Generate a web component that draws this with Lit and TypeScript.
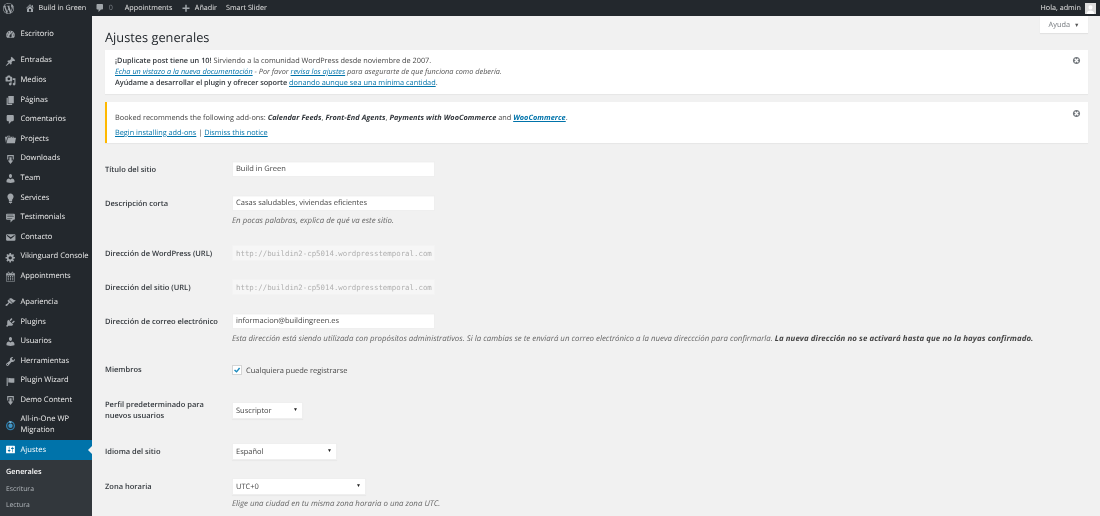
import { LitElement, html, css, svg } from "lit";
import { customElement } from "lit/decorators.js";

const P: Record<string, string> = {
  wp: "M20 10c0-5.51-4.49-10-10-10C4.48 0 0 4.49 0 10c0 5.52 4.48 10 10 10 5.51 0 10-4.48 10-10zM7.78 15.37L4.37 6.22c.55-.02 1.17-.08 1.17-.08.5-.06.44-1.13-.06-1.11 0 0-1.45.11-2.37.11-.18 0-.37 0-.58-.01C4.12 2.69 6.87 1.11 10 1.11c2.33 0 4.45.87 6.05 2.34-.68-.11-1.65.39-1.65 1.58 0 .74.45 1.36.9 2.1.35.61.55 1.36.55 2.46 0 1.49-1.4 5-1.4 5l-3.03-8.37c.54-.02.82-.17.82-.17.5-.05.44-1.25-.06-1.22 0 0-1.44.12-2.38.12-.87 0-2.33-.12-2.33-.12-.5-.03-.56 1.2-.06 1.22l.92.08 1.26 3.41zM17.41 10c.24-.64.74-1.87.43-4.25.7 1.29 1.05 2.71 1.05 4.25 0 3.29-1.73 6.24-4.4 7.78.97-2.59 1.94-5.2 2.92-7.78zM6.1 18.09C3.12 16.65 1.11 13.53 1.11 10c0-1.3.23-2.48.72-3.59C3.25 10.3 4.67 14.2 6.1 18.09zm4.03-6.63l2.58 6.98c-.86.29-1.76.45-2.71.45-.79 0-1.57-.11-2.29-.33.81-2.38 1.62-4.74 2.42-7.1z",
  home: "M16 8.5l1.53 1.53-1.06 1.06L10 4.62l-6.47 6.47-1.06-1.06L10 2.5l4 4v-2h2v4zm-6-2.46l6 5.99V18H4v-5.97zM12 17v-5H8v5h4z",
  comment: "M5 2h9c1.1 0 2 .9 2 2v7c0 1.1-.9 2-2 2h-2l-5 5v-5H5c-1.1 0-2-.9-2-2V4c0-1.1.9-2 2-2z",
  plus: "M17 9v3h-5.500v5.500h-3V12H3V9h5.500V3.500h3V9z",
  dash: "M3.76 16h12.48c1.1-1.37 1.76-3.11 1.76-5 0-4.42-3.58-8-8-8s-8 3.58-8 8c0 1.89.66 3.63 1.76 5zM10 4c.55 0 1 .45 1 1s-.45 1-1 1-1-.45-1-1 .45-1 1-1zM6 6c.55 0 1 .45 1 1s-.45 1-1 1-1-.45-1-1 .45-1 1-1zm8 0c.55 0 1 .45 1 1s-.45 1-1 1-1-.45-1-1 .45-1 1-1zm-5.37 5.55L12 7v6c0 1.1-.9 2-2 2s-2-.9-2-2c0-.57.24-1.08.63-1.45zM4 10c.55 0 1 .45 1 1s-.45 1-1 1-1-.45-1-1 .45-1 1-1zm12 0c.55 0 1 .45 1 1s-.45 1-1 1-1-.45-1-1 .45-1 1-1z",
  pin: "M10.44 3.02l1.82-1.82 6.36 6.35-1.83 1.82c-1.05-.68-2.48-.57-3.41.36l-.75.75c-.92.93-1.04 2.35-.35 3.41l-1.83 1.82-2.41-2.41-2.8 2.79c-.42.42-3.38 2.71-3.8 2.29s1.86-3.39 2.28-3.81l2.79-2.79L4.1 9.36l1.83-1.82c1.05.69 2.48.57 3.4-.36l.75-.75c.93-.92 1.05-2.35.36-3.41z",
  media: "M13 11V4c0-.55-.45-1-1-1h-1.67L9 1H5L3.67 3H2c-.55 0-1 .45-1 1v7c0 .55.45 1 1 1h10c.55 0 1-.45 1-1zM7 4.5c1.38 0 2.5 1.12 2.5 2.5S8.38 9.5 7 9.5 4.5 8.38 4.5 7 5.62 4.5 7 4.5zM14 6h5v10.5c0 1.38-1.12 2.5-2.5 2.5S14 17.88 14 16.5s1.12-2.5 2.5-2.5c.17 0 .34.02.5.05V9h-3V6zm-4 8.05V13h2v3.5c0 1.38-1.12 2.5-2.5 2.5S7 17.88 7 16.5 8.12 14 9.5 14c.17 0 .34.02.5.05z",
  page: "M6 15V2h10v13H6zm-1 1h8v2H3V5h2v11z",
  folder: "M4 5H.78c-.37 0-.74.32-.69.84l1.56 9.99S3.5 8.47 3.86 6.7c.11-.53.61-.7.98-.7H10s-.7-2.08-.77-2.31C9.11 3.25 8.89 3 8.45 3H5.14c-.36 0-.7.23-.8.64C4.25 4.04 4 5 4 5zm4.88 0h-4s.42-1 .87-1h2.13c.48 0 1 1 1 1zM2.67 16.25c-.31.47-.76.75-1.26.75h15.73c.54 0 .92-.31 1.03-.83.44-2.19 1.68-8.44 1.68-8.44.07-.5-.3-.73-.62-.73H16V5.53c0-.16-.26-.53-.66-.53h-3.76c-.52 0-.87.58-.87.58L10 7H5.59c-.32 0-.63.19-.69.5 0 0-1.59 6.7-1.72 7.33-.07.37-.22.99-.51 1.42zM15.01 7H12l.63-.83c.11-.11.28-.17.47-.17h1.61c.21 0 .3.11.3.33z",
  download: "M14.01 4v6h2V2H4v8h2.01V4h8zm-2 2v6h3l-5 6-5-6h3V6h4z",
  users: "M10 9.25c-2.27 0-2.73-3.44-2.73-3.44C7 4.02 7.82 2 9.97 2c2.16 0 2.98 2.02 2.71 3.81 0 0-.41 3.44-2.68 3.44zm0 2.57L12.72 10c2.39 0 4.52 2.33 4.52 4.53v2.49s-3.65 1.13-7.24 1.13c-3.65 0-7.24-1.13-7.24-1.13v-2.49c0-2.25 1.94-4.48 4.47-4.48z",
  bulb: "M10 1c3.11 0 5.63 2.52 5.63 5.62 0 1.84-2.03 4.58-2.03 4.58-.33.44-.6 1.25-.6 1.8v1c0 .55-.45 1-1 1H8c-.55 0-1-.45-1-1v-1c0-.55-.27-1.36-.6-1.8 0 0-2.02-2.74-2.02-4.58C4.38 3.52 6.89 1 10 1zM7 16.87V16h6v.87c0 .62-.13 1.13-1 1.13h-1c0 .62-.4 1-1.02 1s-.98-.38-.98-1H8c-.81 0-1-.51-1-1.13z",
  quote: "M4 3h12c.55 0 1.02.2 1.41.59S18 4.45 18 5v7c0 .55-.2 1.02-.59 1.41S16.55 14 16 14h-1l-5 5v-5H4c-.55 0-1.02-.2-1.41-.59S2 12.55 2 12V5c0-.55.2-1.02.59-1.41S3.45 3 4 3zm11 2H4v1h11V5zm1 3H4v1h12V8zm-3 3H4v1h9v-1z",
  mail: "M3.87 4h13.25C18.37 4 19 4.59 19 5.79v8.42c0 1.19-.63 1.79-1.88 1.79H3.87c-1.25 0-1.88-.6-1.88-1.79V5.79c0-1.2.63-1.79 1.88-1.79zm6.62 8.6l6.74-5.53c.24-.2.43-.66.13-1.07-.29-.41-.82-.42-1.17-.17l-5.7 3.86L4.8 5.83c-.35-.25-.88-.24-1.17.17-.3.41-.11.87.13 1.07z",
  gear: "M18 12h-2.18c-.17.7-.44 1.35-.81 1.93l1.54 1.54-2.1 2.1-1.54-1.54c-.58.36-1.23.63-1.91.79V19H8v-2.18c-.68-.16-1.33-.43-1.91-.79l-1.54 1.54-2.12-2.12 1.54-1.54c-.36-.58-.63-1.23-.79-1.91H1V9.03h2.17c.16-.7.44-1.35.8-1.94L2.43 5.55l2.1-2.1 1.54 1.54c.58-.37 1.24-.64 1.93-.81V2h3v2.18c.68.16 1.33.43 1.91.79l1.54-1.54 2.12 2.12-1.54 1.54c.36.59.64 1.24.8 1.94H18V12zm-8.5 1.5c1.66 0 3-1.34 3-3s-1.34-3-3-3-3 1.34-3 3 1.34 3 3 3z",
  cal: "M15 4h3v15H2V4h3V3c0-.41.15-.76.44-1.06.29-.29.65-.44 1.06-.44s.77.15 1.06.44c.29.3.44.65.44 1.06v1h4V3c0-.41.15-.76.44-1.06.29-.29.65-.44 1.06-.44s.77.15 1.06.44c.29.3.44.65.44 1.06v1zM6 3v2.5c0 .14.05.26.15.36.09.09.21.14.35.14s.26-.05.35-.14c.1-.1.15-.22.15-.36V3c0-.14-.05-.26-.15-.35-.09-.1-.21-.15-.35-.15s-.26.05-.35.15c-.1.09-.15.21-.15.35zm7 0v2.5c0 .14.05.26.14.36.1.09.22.14.36.14s.26-.05.36-.14c.09-.1.14-.22.14-.36V3c0-.14-.05-.26-.14-.35-.1-.1-.22-.15-.36-.15s-.26.05-.36.15c-.09.09-.14.21-.14.35zm4 15V8H3v10h14zM7 9v2H5V9h2zm2 0h2v2H9V9zm4 2V9h2v2h-2zm-6 1v2H5v-2h2zm2 0h2v2H9v-2zm4 2v-2h2v2h-2zm-6 1v2H5v-2h2zm4 2H9v-2h2v2zm4 0h-2v-2h2v2z",
  brush: "M14.48 11.06L7.41 3.99l1.5-1.5c.5-.56 2.3-.47 3.51.32 1.21.8 1.43 1.28 2.91 2.1 1.18.64 2.45 1.26 4.45.85zm-.71.71L6.7 4.7 4.93 6.47c-.39.39-.39 1.02 0 1.41l1.06 1.06c.39.39.39 1.03 0 1.42-.6.6-1.43 1.11-2.21 1.69-.35.26-.7.53-1.01.84C1.43 13.23.4 14.96 1.3 15.86s2.64-.13 3.98-1.47c.31-.31.58-.66.85-1.02.57-.78 1.08-1.61 1.69-2.21.39-.39 1.02-.39 1.41 0l1.06 1.06c.39.39 1.02.39 1.41 0z",
  plug: "M13.11 4.36L9.87 7.6 8 5.73l3.24-3.24c.35-.34 1.05-.2 1.56.32.52.51.66 1.21.31 1.55zm-8 1.77l.91-1.12 9.01 9.01-1.19.84c-.71.71-2.63 1.16-3.82 1.16H6.14L4.9 17.26c-.59.59-1.54.59-2.12 0-.59-.58-.59-1.53 0-2.12l1.24-1.24v-3.88c0-1.13.4-3.19 1.09-3.89zm7.26 3.97l3.24-3.24c.34-.35 1.04-.21 1.55.31.52.51.66 1.21.31 1.55l-3.24 3.25z",
  wrench: "M16.68 9.77c-1.34 1.34-3.3 1.67-4.95.99l-5.41 6.52c-.99.99-2.59.99-3.58 0s-.99-2.59 0-3.57l6.52-5.42c-.68-1.65-.35-3.61.99-4.95 1.28-1.28 3.12-1.62 4.72-1.06l-2.89 2.89 2.82 2.82 2.86-2.87c.53 1.58.18 3.39-1.08 4.65zM3.81 16.21c.4.39 1.04.39 1.43 0 .4-.4.4-1.04 0-1.43-.39-.4-1.03-.4-1.43 0-.39.39-.39 1.03 0 1.43z",
  flag: "M5 18V3H3v15h2zm1-6V4c3-1 7 1 11 0v8c-3 1.27-8-1-11 0z",
  settings: "M18 16V4c0-.55-.45-1-1-1H3c-.55 0-1 .45-1 1v12c0 .55.45 1 1 1h14c.55 0 1-.45 1-1zM8 11h1c.55 0 1 .45 1 1s-.45 1-1 1H8v1.5c0 .28-.22.5-.5.5s-.5-.22-.5-.5V13H6c-.55 0-1-.45-1-1s.45-1 1-1h1V5.5c0-.28.22-.5.5-.5s.5.22.5.5V11zm5-2h-1c-.55 0-1-.45-1-1s.45-1 1-1h1V5.5c0-.28.22-.5.5-.5s.5.22.5.5V7h1c.55 0 1 .45 1 1s-.45 1-1 1h-1v5.5c0 .28-.22.5-.5.5s-.5-.22-.5-.5V9z",
  dismiss: "M10 2c4.42 0 8 3.58 8 8s-3.58 8-8 8-8-3.58-8-8 3.58-8 8-8zm5 11l-3-3 3-3-2-2-3 3-3-3-2 2 3 3-3 3 2 2 3-3 3 3z",
};

const icon = (name: string, cls = "ic") =>
  html`<svg class=${cls} viewBox="0 0 20 20" fill="currentColor">${svg`<path fill-rule="evenodd" d=${P[name]}></path>`}</svg>`;

const swirl = html`<svg class="ic" viewBox="0 0 20 20" fill="none">
  <circle cx="10" cy="10.500" r="7" stroke="#2f7fae" stroke-width="2.400"></circle>
  <circle cx="10" cy="10.500" r="4" fill="#3f94c4"></circle>
  <path d="M7 1.500l6 1.500-4 3.500z" fill="#7fb8d8"></path>
</svg>`;

type Item = { i: string; t: string };
const group1: Item[] = [
  { i: "pin", t: "Entradas" }, { i: "media", t: "Medios" }, { i: "page", t: "Páginas" },
  { i: "comment", t: "Comentarios" }, { i: "folder", t: "Projects" }, { i: "download", t: "Downloads" },
  { i: "users", t: "Team" }, { i: "bulb", t: "Services" }, { i: "quote", t: "Testimonials" },
  { i: "mail", t: "Contacto" }, { i: "gear", t: "Vikinguard Console" }, { i: "cal", t: "Appointments" },
];
const group2: Item[] = [
  { i: "brush", t: "Apariencia" }, { i: "plug", t: "Plugins" }, { i: "users", t: "Usuarios" },
  { i: "wrench", t: "Herramientas" }, { i: "flag", t: "Plugin Wizard" }, { i: "download", t: "Demo Content" },
];

@customElement("app-root")
export class AppRoot extends LitElement {
  static styles = css`
    :host { display: block; width: 1100px; height: 516px; overflow: hidden; background: #f1f1f1;
      font-family: "Open Sans", "Noto Sans", sans-serif; font-size: 7.33px; line-height: 11.4px; color: #444;
      text-rendering: geometricPrecision; filter: blur(0.3px); }
    * { box-sizing: border-box; }
    a { color: #0073aa; text-decoration: underline; }

    .bar { height: 16px; background: #23282d; color: #e6e6e6; display: flex; align-items: center; font-size: 7.2px; }
    .bar span { padding-top: 1.5px; }
    .bar .ic { width: 10px; height: 10px; color: #a0a5aa; flex: none; }
    .bar .wp { width: 11px; height: 11px; margin: 0 11px 0 3px; }
    .bar-item { display: flex; align-items: center; gap: 3.5px; margin-right: 9px; white-space: nowrap; }
    .bar-item.cm { margin-right: 12px; }
    .bar-zero { color: #7d8389; }
    .bar-right { margin-left: auto; display: flex; align-items: center; gap: 4px; margin-right: 4px; }
    .avatar { width: 11px; height: 11px; background: #dcdcdc; display: block; }

    .body { display: flex; height: 500px; }
    .side { width: 92px; flex: none; background: #23282d; padding-top: 8.8px; color: #eee; font-size: 7.6px; }
    .row { display: flex; align-items: center; height: 19.6px; padding-left: 5px; gap: 4.5px; white-space: nowrap; position: relative; }
    .row .ic { width: 11px; height: 11px; color: #a0a5aa; flex: none; }
    .row.two { height: 29.4px; white-space: normal; line-height: 11.2px; }
    .sep { height: 7px; }
    .sep.b { height: 6.4px; }
    .row.cur { background: #0073aa; color: #fff; height: 20px; }
    .row.cur span { padding-top: 1.5px; }
    .row.cur .ic { color: #fff; }
    .row.cur::after { content: ""; position: absolute; right: 0; top: 6px; border: 4px solid transparent;
      border-right-color: #f1f1f1; border-left-width: 0; }
    .sub { background: #32373c; padding-top: 4.6px; height: 60px; font-size: 6.8px; color: #b4b9be; }
    .sub div { padding-left: 6px; height: 16.2px; display: flex; align-items: center; }
    .sub .on { color: #fff; font-weight: 600; font-size: 7.3px; }

    .main { flex: 1; min-width: 0; padding: 0 12px 0 13px; position: relative; }
    .help { position: absolute; top: 0; right: 12px; width: 48px; height: 17px; padding-top: 1.5px; background: #fff;
      box-shadow: 0 1px 1px rgba(0,0,0,.06); color: #72777c; display: flex; align-items: center; justify-content: center; gap: 4px; }
    .help i { font-style: normal; font-size: 5.5px; color: #555; }
    h1 { margin: 0; padding-top: 12px; height: 34px; font-weight: 400; font-size: 12.8px; line-height: 18px; color: #23282d; }

    .notice { background: #fff; box-shadow: 0 1px 1px rgba(0,0,0,.04); position: relative; padding: 5.5px 6px 0 10px; height: 44px; }
    .notice.warn { margin-top: 8px; height: 41px; border-left: 2px solid #ffb900; padding: 11px 6px 0 8px; }
    .notice p { margin: 0; }
    .notice.warn p + p { margin-top: 3.7px; }
    .notice .x { position: absolute; top: 6px; right: 7px; width: 9px; height: 9px; color: #72777c; }
    .notice.warn .x { top: 7px; }
    .notice b { font-weight: 600; color: #32373c; }
    .notice b.nar { letter-spacing: -.06px; }
    .notice .bi { font-weight: 700; font-style: italic; color: #32373c; letter-spacing: .06px; }
    .notice a.bi { color: #0073aa; }
    .notice em { color: #555; }

    .form { padding-top: 18px; }
    .f { display: grid; grid-template-columns: 127px 1fr; align-items: start; }
    .lbl { font-weight: 600; color: #32373c; font-size: 7.5px; line-height: 11px; }
    .lbl.wrap { max-width: 110px; }
    .input { width: 203px; height: 16px; background: #fff; box-shadow: inset 0 1px 1px rgba(0,0,0,.03); border: 1px solid #efefef;
      display: flex; align-items: center; padding: 2.4px 0 0 3px; color: #444; white-space: nowrap; overflow: hidden; font-size: 7.5px; }
    .input.off { padding-top: 1px; background: #f6f6f6; border-color: #f3f3f3; box-shadow: none; color: #b0b0b0; font-family: "DejaVu Sans Mono", "Liberation Mono", monospace; font-size: 7.4px; }
    .hint { font-style: italic; color: #666; margin-top: 4.5px; white-space: nowrap; font-size: 7.87px; }
    .hint b { font-weight: 700; color: #444; letter-spacing: .07px; }
    .mt { padding-top: 4px; }
    .check { display: flex; align-items: center; gap: 4px; color: #444; font-size: 7.5px; padding-top: 3px; }
    .check span + span { padding-top: 1.5px; }
    .box { width: 10px; height: 10px; background: #fff; border: 1px solid #d5d5d5; display: flex; align-items: center; justify-content: center; }
    .box svg { width: 8px; height: 8px; }
    .sel { height: 17px; background: #fff; border: 1px solid #efefef; box-shadow: 0 1px 1px rgba(0,0,0,.03); display: flex; align-items: center;
      justify-content: space-between; padding: 0 4px 0 3px; color: #444; font-size: 7.5px; }
    .sel span { padding-top: 3px; }
    .sel i { font-style: normal; font-size: 5px; color: #222; }
    .sel.drop { margin-top: 2px; }
  `;

  render() {
    const row = (m: Item) => html`<div class="row">${icon(m.i)}<span>${m.t}</span></div>`;
    return html`
      <div class="bar">
        ${icon("wp", "ic wp")}
        <div class="bar-item">${icon("home")}<span>Build in Green</span></div>
        <div class="bar-item cm">${icon("comment")}<span class="bar-zero">0</span></div>
        <div class="bar-item"><span>Appointments</span></div>
        <div class="bar-item">${icon("plus")}<span>Añadir</span></div>
        <div class="bar-item"><span>Smart Slider</span></div>
        <div class="bar-right"><span>Hola, admin</span>
          <svg class="avatar" viewBox="0 0 20 20"><path fill="#fff" d="M10 4a3.6 3.6 0 0 1 3.6 4c0 2-1.5 4-3.6 4S6.400 10 6.400 8A3.600 3.600 0 0 1 10 4zM3 20c0-4 3-6.500 7-6.500s7 2.500 7 6.500z"></path></svg>
        </div>
      </div>
      <div class="body">
        <nav class="side">
          <div class="row">${icon("dash")}<span>Escritorio</span></div>
          <div class="sep"></div>
          ${group1.map(row)}
          <div class="sep b"></div>
          ${group2.map(row)}
          <div class="row two">${swirl}<span>All-in-One WP Migration</span></div>
          <div class="row cur">${icon("settings")}<span>Ajustes</span></div>
          <div class="sub">
            <div class="on">Generales</div>
            <div>Escritura</div>
            <div>Lectura</div>
          </div>
        </nav>
        <main class="main">
          <div class="help"><span>Ayuda</span><i>▼</i></div>
          <h1>Ajustes generales</h1>
          <div class="notice">
            <p><b>¡Duplicate post tiene un 10!</b> Sirviendo a la comunidad WordPress desde noviembre de 2007.</p>
            <p><em><a href="#">Echa un vistazo a la nueva documentación</a> - Por favor <a href="#">revisa los ajustes</a> para asegurarte de que funciona como debería.</em></p>
            <p><b class="nar">Ayúdame a desarrollar el plugin y ofrecer soporte</b> <a href="#">donando aunque sea una mínima cantidad</a>.</p>
            ${icon("dismiss", "x")}
          </div>
          <div class="notice warn">
            <p>Booked recommends the following add-ons: <span class="bi">Calendar Feeds</span>, <span class="bi">Front-End Agents</span>, <span class="bi">Payments with WooCommerce</span> and <a class="bi" href="#">WooCommerce</a>.</p>
            <p><a href="#">Begin installing add-ons</a> | <a href="#">Dismiss this notice</a></p>
            ${icon("dismiss", "x")}
          </div>
          <div class="form">
            <div class="f" style="height:34px"><div class="lbl mt">Título del sitio</div><div class="input">Build in Green</div></div>
            <div class="f" style="height:50px"><div class="lbl mt">Descripción corta</div><div><div class="input">Casas saludables, viviendas eficientes</div><div class="hint">En pocas palabras, explica de qué va este sitio.</div></div></div>
            <div class="f" style="height:34px"><div class="lbl mt">Dirección de WordPress (URL)</div><div class="input off">http://buildin2-cp5014.wordpresstemporal.com</div></div>
            <div class="f" style="height:34px"><div class="lbl mt">Dirección del sitio (URL)</div><div class="input off">http://buildin2-cp5014.wordpresstemporal.com</div></div>
            <div class="f" style="height:48px"><div class="lbl mt">Dirección de correo electrónico</div><div><div class="input">informacion@buildingreen.es</div><div class="hint">Esta dirección está siendo utilizada con propósitos administrativos. Si la cambias se te enviará un correo electrónico a la nueva direccción para confirmarla. <b>La nueva dirección no se activará hasta que no la hayas confirmado.</b></div></div></div>
            <div class="f" style="height:39px"><div class="lbl mt">Miembros</div><div class="check"><span class="box"><svg viewBox="0 0 20 20"><path fill="#1e8cbe" d="M15 4l3 2.500L9 17 2.500 11 5 8.500l4 3.500z"></path></svg></span><span>Cualquiera puede registrarse</span></div></div>
            <div class="f" style="height:43px"><div class="lbl wrap">Perfil predeterminado para nuevos usuarios</div><div class="sel drop" style="width:71px"><span>Suscriptor</span><i>▼</i></div></div>
            <div class="f" style="height:35px"><div class="lbl mt">Idioma del sitio</div><div class="sel" style="width:105px"><span>Español</span><i>▼</i></div></div>
            <div class="f"><div class="lbl mt">Zona horaria</div><div><div class="sel" style="width:134px"><span>UTC+0</span><i>▼</i></div><div class="hint" style="margin-top:3.5px">Elige una ciudad en tu misma zona horaria o una zona UTC.</div></div></div>
          </div>
        </main>
      </div>
    `;
  }
}
